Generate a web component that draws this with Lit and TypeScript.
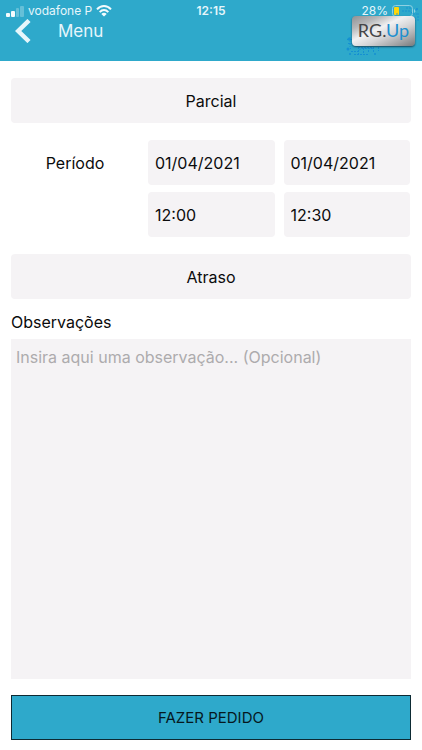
import { LitElement, html, css } from "lit";
import { customElement, property, state } from "lit/decorators.js";

@customElement("status-bar")
class StatusBar extends LitElement {
  static styles = css`
    :host {
      display: grid;
      grid-template-columns: 1fr auto 1fr;
      align-items: center;
      height: 16px;
      padding: 3px 6px 0;
      color: #e6f6fb;
      font-size: 12px;
      line-height: 16px;
    }
    .side {
      display: flex;
      align-items: center;
      gap: 4px;
      white-space: nowrap;
    }
    .end {
      justify-content: flex-end;
    }
    .time {
      font-weight: 600;
    }
    svg {
      display: block;
    }
  `;

  render() {
    return html`
      <div class="side">
        <svg width="18" height="11" viewBox="0 0 18 11" fill="#f4fbfd" aria-hidden="true">
          <rect x="0" y="7" width="4" height="4" rx="1" />
          <rect x="5" y="5" width="4" height="6" rx="1" />
          <rect x="10" y="2" width="3" height="9" rx="1" opacity="0.28" />
          <rect x="14" y="0" width="4" height="11" rx="1" opacity="0.28" />
        </svg>
        <span>vodafone P</span>
        <svg width="16" height="12" viewBox="0 0 16 12" aria-hidden="true">
          <g fill="none" stroke="#f4fbfd" stroke-width="2">
            <path d="M1 4.4C5-.1 11-.1 15 4.4" />
            <path d="M3.7 7.1C6.3 4.4 9.7 4.4 12.3 7.1" />
          </g>
          <path d="M8 11.6 5.300 8.900C6.800 7.500 9.200 7.500 10.700 8.900Z" fill="#f4fbfd" />
        </svg>
      </div>
      <span class="time">12:15</span>
      <div class="side end">
        <span>28%</span>
        <svg width="24" height="12" viewBox="0 0 24 12" aria-hidden="true">
          <rect x="0.5" y="0.5" width="20" height="11" rx="3" fill="none" stroke="#8fd0e2" />
          <rect x="2" y="2" width="5" height="8" rx="1" fill="#ffd60a" />
          <path d="M22 4v4c2-1 2-3 0-4Z" fill="#8fd0e2" />
        </svg>
      </div>
    `;
  }
}

@customElement("brand-badge")
class BrandBadge extends LitElement {
  static styles = css`
    :host {
      display: grid;
      width: 76px;
      height: 52px;
    }
    .traces,
    .plate {
      grid-area: 1 / 1;
    }
    .plate {
      place-self: start end;
      box-sizing: border-box;
      width: 63px;
      height: 30px;
      margin: 11px 5px 0 0;
      border-radius: 4px;
      background: linear-gradient(155deg, #8f9193 0%, #b5b6b8 22%, #f1f1f2 42%, #d5d5d7 60%, #a3a4a6 82%, #77797b 100%);
      box-shadow: 0 1px 2px #17465a;
      text-align: center;
      font-family: Lato, sans-serif;
      font-size: 18px;
      line-height: 28px;
      color: #454547;
      white-space: nowrap;
    }
    .up {
      color: #1b8fd0;
    }
  `;

  render() {
    return html`
      <svg class="traces" width="76" height="52" viewBox="0 0 76 52" fill="none" stroke="#1590d2" aria-hidden="true">
        <path
          d="M52 9h4M58 6h8l3 3h4M62 3h6M71 5h3M74 8v9M71 12v4"
          stroke-dasharray="2 1"
          opacity="0.8"
        />
        <path
          d="M6 32v10M3 34.500h6M4 38.500h7l3 4h16M7 46.500h7l3-3h12M10 49.500h14M14.500 42v7M19.500 43v6M24.500 42v6M29.500 42v6M34.500 42v4M3 43.500h4"
          stroke-dasharray="2 1"
        />
        <g fill="#1590d2" stroke="none">
          <circle cx="5" cy="34" r="1.5" />
          <circle cx="4" cy="44" r="1.5" />
          <circle cx="6" cy="49" r="1" />
          <circle cx="31" cy="49" r="1" />
          <circle cx="73" cy="4" r="1" />
        </g>
      </svg>
      <div class="plate">RG.<span class="up">Up</span></div>
    `;
  }
}

@customElement("app-root")
class AppRoot extends LitElement {
  @property() kind = "Parcial";
  @property() reason = "Atraso";
  @state() private notes = "";

  static styles = css`
    :host {
      display: flex;
      flex-direction: column;
      min-height: 100vh;
      background: #fff;
      color: #0b0b0c;
      font-family: Inter, "Liberation Sans", sans-serif;
      font-size: 16px;
      line-height: 24px;
    }
    header {
      position: relative;
      padding-bottom: 18px;
      background: #2ea9cb;
    }
    .badge {
      position: absolute;
      top: 5px;
      right: 2px;
    }
    .back {
      display: flex;
      align-items: center;
      gap: 27px;
      height: 24px;
      padding: 0 0 0 15px;
      border: 0;
      background: none;
      color: #e6f6fb;
      font: inherit;
      font-size: 17px;
    }
    form {
      display: flex;
      flex: 1;
      flex-direction: column;
      padding: 17px 11px 10px;
    }
    .field {
      box-sizing: border-box;
      width: 100%;
      min-width: 0;
      height: 45px;
      margin: 0;
      padding: 0 7px;
      border: 0;
      border-radius: 4px;
      background: #f5f3f5;
      color: inherit;
      font: inherit;
    }
    .period {
      display: grid;
      grid-template-columns: 128px 1fr 1fr;
      gap: 7px 9px;
      align-items: center;
      margin: 17px 1px 17px 0;
    }
    .period-label {
      text-align: center;
    }
    .second-row {
      grid-column: 2;
    }
    .notes-label {
      margin: 11px 0 5px;
    }
    .notes {
      box-sizing: border-box;
      flex: 1;
      width: 100%;
      min-height: 120px;
      margin: 0 0 16px;
      padding: 6px 5px;
      border: 0;
      border-radius: 0;
      background: #f5f3f5;
      color: inherit;
      font: inherit;
      resize: none;
    }
    .notes::placeholder {
      color: #adabad;
      opacity: 1;
    }
    .submit {
      height: 45px;
      border: 1px solid #0d2a33;
      background: #2ea9cb;
      color: #06181e;
      font: inherit;
      font-size: 15px;
    }
  `;

  private onNotes(e: Event) {
    this.notes = (e.target as HTMLTextAreaElement).value;
  }

  render() {
    return html`
      <header>
        <status-bar></status-bar>
        <button class="back" type="button">
          <svg width="16" height="24" viewBox="0 0 16 24" fill="none" stroke="#e6f6fb" stroke-width="4.5" aria-hidden="true">
            <path d="M14 1.5 3.2 12 14 22.5" />
          </svg>
          <span>Menu</span>
        </button>
        <brand-badge class="badge"></brand-badge>
      </header>
      <form @submit=${(e: Event) => e.preventDefault()}>
        <button class="field" type="button">${this.kind}</button>
        <div class="period">
          <label class="period-label" for="start-date">Período</label>
          <input class="field" id="start-date" value="01/04/2021" />
          <input class="field" aria-label="Data final" value="01/04/2021" />
          <input class="field second-row" aria-label="Hora inicial" value="12:00" />
          <input class="field" aria-label="Hora final" value="12:30" />
        </div>
        <button class="field" type="button">${this.reason}</button>
        <label class="notes-label" for="notes">Observações</label>
        <textarea
          class="notes"
          id="notes"
          placeholder="Insira aqui uma observação... (Opcional)"
          .value=${this.notes}
          @input=${this.onNotes}
        ></textarea>
        <button class="submit" type="submit">FAZER PEDIDO</button>
      </form>
    `;
  }
}
